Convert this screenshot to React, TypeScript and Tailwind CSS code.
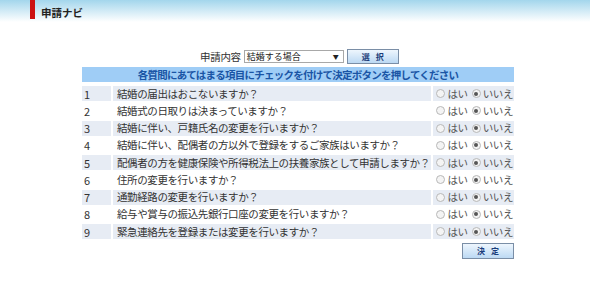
import React from "react";

const questions = [
  "結婚の届出はおこないますか？",
  "結婚式の日取りは決まっていますか？",
  "結婚に伴い、戸籍氏名の変更を行いますか？",
  "結婚に伴い、配偶者の方以外で登録をするご家族はいますか？",
  "配偶者の方を健康保険や所得税法上の扶養家族として申請しますか？",
  "住所の変更を行いますか？",
  "通勤経路の変更を行いますか？",
  "給与や賞与の振込先銀行口座の変更を行いますか？",
  "緊急連絡先を登録または変更を行いますか？",
];

function Radio({ checked }: { checked?: boolean }) {
  return (
    <span className="inline-flex shrink-0 w-[9px] h-[9px] rounded-full border border-[#b8b8b8] bg-[#f4f4f4] items-center justify-center mr-[2px]">
      {checked && <span className="w-[4px] h-[4px] rounded-full bg-[#555]" />}
    </span>
  );
}

export default function App() {
  return (
    <div
      className="w-[590px] h-[304px] bg-white relative text-[#333]"
      style={{ fontFamily: '"Noto Sans CJK JP", "Noto Sans", sans-serif' }}
    >
      <div className="h-[22px] bg-gradient-to-b from-[#a3d6ec] to-white flex items-start">
        <div className="ml-[30px] w-[5px] h-[19px] bg-[#cc1111]" />
        <div className="ml-[6px] mt-[7px] text-[10.5px] leading-[12px] font-bold text-[#222]">申請ナビ</div>
      </div>

      <div className="mt-[27px] flex items-center h-[15px]">
        <div className="ml-[200px] text-[10.5px] leading-[14px] tracking-[-0.3px] text-[#333] whitespace-nowrap">申請内容</div>
        <div className="ml-[3px] w-[100px] h-[13px] border border-[#a8a8a8] bg-white flex items-center justify-between px-[2px]">
          <span className="text-[9px] leading-[11px] text-[#222] whitespace-nowrap">結婚する場合</span>
          <span className="text-[6px] leading-[8px] text-[#222] mr-[2px]">▼</span>
        </div>
        <div className="ml-[3px] w-[52px] h-[15px] border border-[#7a8ea6] bg-gradient-to-b from-[#eef6fd] to-[#bcd9f3] flex items-center justify-center">
          <span className="text-[8px] leading-[10px] font-bold text-[#1b3d7a] tracking-[6px] pl-[6px]">選択</span>
        </div>
      </div>

      <div className="ml-[82px] w-[432px] mt-[3px]">
        <div className="h-[15px] bg-[#9fcdf6] flex items-center justify-center">
          <span className="text-[10.5px] leading-[14px] tracking-[-0.75px] font-bold text-[#1a55a5] whitespace-nowrap">
            各質問にあてはまる項目にチェックを付けて決定ボタンを押してください
          </span>
        </div>

        <div className="mt-[4px] flex flex-col gap-y-[2.25px]">
          {questions.map((q, i) => {
            const odd = i % 2 === 0;
            const bg = odd ? "bg-[#e7ecf4]" : "bg-white";
            return (
              <div key={i} className="flex h-[15px] gap-x-[2px]">
                <div className={`w-[29px] shrink-0 ${bg} flex items-center pl-[2px] text-[11px] leading-[14px]`}>{i + 1}</div>
                <div className={`w-[318px] shrink-0 ${bg} flex items-center pl-[4px] text-[10.5px] leading-[14px] tracking-[-0.4px] whitespace-nowrap overflow-hidden`}>{q}</div>
                <div className={`flex-1 ${bg} flex items-center justify-end pr-[1px] text-[10.5px] leading-[14px] tracking-[-0.4px] text-[#555] whitespace-nowrap`}>
                  <Radio />
                  <span className="mr-[4px]">はい</span>
                  <Radio checked />
                  <span>いいえ</span>
                </div>
              </div>
            );
          })}
        </div>

        <div className="flex justify-end mt-[4px]">
          <div className="w-[52px] h-[16px] border border-[#7a8ea6] bg-gradient-to-b from-[#eef6fd] to-[#bcd9f3] flex items-center justify-center">
            <span className="text-[8px] leading-[10px] font-bold text-[#1b3d7a] tracking-[6px] pl-[6px]">決定</span>
          </div>
        </div>
      </div>
    </div>
  );
}
